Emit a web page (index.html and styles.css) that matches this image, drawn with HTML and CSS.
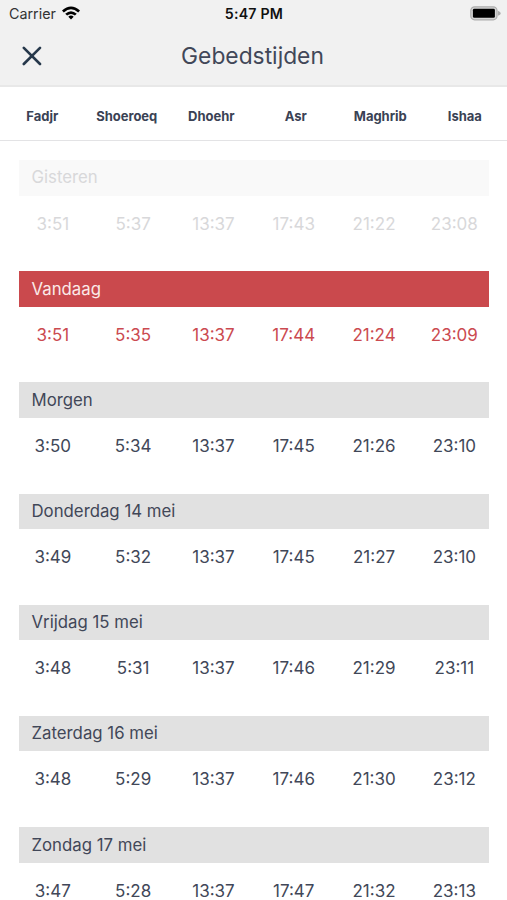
FILE: index.html
```html
<!DOCTYPE html>
<html lang="nl">
<head>
<meta charset="utf-8">
<title>Gebedstijden</title>
<link rel="stylesheet" href="styles.css">
</head>
<body>
<header class="top">
  <div class="status">
    <div class="carrier"><span class="carrier-name">Carrier</span>
      <svg class="wifi" width="18" height="14" viewBox="0 0 18 14"><path d="M0 4.5Q9-3.5 18 4.5L16.2 6.4Q9 .2 1.8 6.4ZM3.2 7.7Q9 2.6 14.8 7.7L12.9 9.6Q9 6.2 5.1 9.6ZM6.3 10.8Q9 8.4 11.7 10.8L9 13.6Z"/></svg>
    </div>
    <span class="clock">5:47 PM</span>
    <svg class="battery" width="31" height="15" viewBox="0 0 31 15"><rect x=".8" y=".8" width="26.2" height="13" rx="3.8" fill="#d6d6d6" stroke="#adadad" stroke-width="1.2"/><rect x="2.9" y="2.8" width="22" height="9" rx="1.4"/><path d="M27.9 4.8Q30.8 5.8 30.8 7.3T27.9 9.8Z" fill="#adadad"/></svg>
  </div>
  <div class="nav">
    <svg class="close" width="20" height="20" viewBox="0 0 20 20"><path d="M1.8 1.8 18 18M18 1.8 1.8 18" fill="none" stroke="#26384b" stroke-width="2.6" stroke-linecap="round"/></svg>
    <h1 class="title">Gebedstijden</h1>
  </div>
</header>
<div class="names"><span>Fadjr</span><span>Shoeroeq</span><span>Dhoehr</span><span>Asr</span><span>Maghrib</span><span>Ishaa</span></div>
<main class="days">
  <section class="day past"><h2>Gisteren</h2><div class="times"><span>3:51</span><span>5:37</span><span>13:37</span><span>17:43</span><span>21:22</span><span>23:08</span></div></section>
  <section class="day today"><h2>Vandaag</h2><div class="times"><span>3:51</span><span>5:35</span><span>13:37</span><span>17:44</span><span>21:24</span><span>23:09</span></div></section>
  <section class="day"><h2>Morgen</h2><div class="times"><span>3:50</span><span>5:34</span><span>13:37</span><span>17:45</span><span>21:26</span><span>23:10</span></div></section>
  <section class="day"><h2>Donderdag 14 mei</h2><div class="times"><span>3:49</span><span>5:32</span><span>13:37</span><span>17:45</span><span>21:27</span><span>23:10</span></div></section>
  <section class="day"><h2>Vrijdag 15 mei</h2><div class="times"><span>3:48</span><span>5:31</span><span>13:37</span><span>17:46</span><span>21:29</span><span>23:11</span></div></section>
  <section class="day"><h2>Zaterdag 16 mei</h2><div class="times"><span>3:48</span><span>5:29</span><span>13:37</span><span>17:46</span><span>21:30</span><span>23:12</span></div></section>
  <section class="day"><h2>Zondag 17 mei</h2><div class="times"><span>3:47</span><span>5:28</span><span>13:37</span><span>17:47</span><span>21:32</span><span>23:13</span></div></section>
</main>
</body>
</html>
```
FILE: styles.css
```css
* { box-sizing: border-box; }
body {
  margin: 0;
  height: 900px;
  overflow: hidden;
  background: #fff;
  color: #414758;
  font-family: Inter, "Liberation Sans", sans-serif;
}
h1, h2 { margin: 0; font-weight: 400; }
.top {
  height: 87px;
  background: #f1f1f1;
  border-bottom: 2px solid #e8e8e8;
}
.status {
  display: grid;
  grid-template-columns: 1fr auto 1fr;
  align-items: center;
  height: 27px;
  padding: 0 7px 0 9px;
  color: #111;
}
.carrier { display: flex; align-items: center; gap: 6px; }
.carrier-name { font-size: 14.3px; color: #333; }
.wifi { margin-top: -2px; }
.clock { font-size: 14.2px; font-weight: 600; letter-spacing: .2px; margin-left: -1px; }
.battery { justify-self: end; margin-right: -1px; }
.nav {
  display: grid;
  grid-template-columns: 41px 1fr 43px;
  align-items: center;
  height: 58px;
}
.close { margin-left: 21.5px; }
.title { text-align: center; font-size: 22.8px; line-height: 30px; }
.names {
  display: grid;
  grid-template-columns: repeat(6, 1fr);
  height: 54px;
  border-bottom: 1px solid #e3e3e5;
  font-size: 13px;
  font-weight: 700;
  line-height: 58px;
  letter-spacing: -.03px;
  text-align: center;
  color: #3a4254;
}
.days { padding: 19px 18.5px 0 19.3px; }
.day { height: 111.2px; }
.day h2 {
  height: 35.5px;
  padding: .4px 0 0 12.2px;
  background: #e1e1e1;
  font-size: 16.8px;
  line-height: 35.5px;
}
.times {
  display: grid;
  grid-template-columns: repeat(6, 1fr);
  margin: 0 -6px 0 -6.6px;
  font-size: 17px;
  line-height: 57.5px;
  text-align: center;
}
.past h2 { background: #f9f9f9; }
.past { color: #d8d8da; }
.today { color: #cb4a50; }
.today h2 { background: #ca494d; color: #fbe9e8; }
```
